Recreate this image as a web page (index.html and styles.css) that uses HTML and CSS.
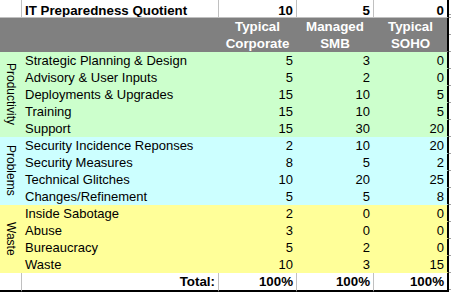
FILE: index.html
```html
<!DOCTYPE html>
<html>
<head>
<meta charset="utf-8">
<link rel="stylesheet" href="styles.css">
</head>
<body>
<div class="sheet">
  <div class="grid">
    <div class="cell title"></div>
    <div class="cell title lbl bold">IT Preparedness Quotient</div>
    <div class="cell title num bold">10</div>
    <div class="cell title num bold">5</div>
    <div class="cell title num bold last">0</div>

    <div class="cell head"></div>
    <div class="cell head"></div>
    <div class="cell head hd">Typical<br>Corporate</div>
    <div class="cell head hd">Managed<br>SMB</div>
    <div class="cell head hd last">Typical<br>SOHO</div>

    <div class="cell green group span5"><span>Productivity</span></div>
    <div class="cell green lbl">Strategic Planning &amp; Design</div>
    <div class="cell green num">5</div><div class="cell green num">3</div><div class="cell green num last">0</div>
    <div class="cell green lbl">Advisory &amp; User Inputs</div>
    <div class="cell green num">5</div><div class="cell green num">2</div><div class="cell green num last">0</div>
    <div class="cell green lbl">Deployments &amp; Upgrades</div>
    <div class="cell green num">15</div><div class="cell green num">10</div><div class="cell green num last">5</div>
    <div class="cell green lbl">Training</div>
    <div class="cell green num">15</div><div class="cell green num">10</div><div class="cell green num last">5</div>
    <div class="cell green lbl">Support</div>
    <div class="cell green num">15</div><div class="cell green num">30</div><div class="cell green num last">20</div>

    <div class="cell cyan group span4"><span>Problems</span></div>
    <div class="cell cyan lbl">Security Incidence Reponses</div>
    <div class="cell cyan num">2</div><div class="cell cyan num">10</div><div class="cell cyan num last">20</div>
    <div class="cell cyan lbl">Security Measures</div>
    <div class="cell cyan num">8</div><div class="cell cyan num">5</div><div class="cell cyan num last">2</div>
    <div class="cell cyan lbl">Technical Glitches</div>
    <div class="cell cyan num">10</div><div class="cell cyan num">20</div><div class="cell cyan num last">25</div>
    <div class="cell cyan lbl">Changes/Refinement</div>
    <div class="cell cyan num">5</div><div class="cell cyan num">5</div><div class="cell cyan num last">8</div>

    <div class="cell yellow group span4"><span>Waste</span></div>
    <div class="cell yellow lbl">Inside Sabotage</div>
    <div class="cell yellow num">2</div><div class="cell yellow num">0</div><div class="cell yellow num last">0</div>
    <div class="cell yellow lbl">Abuse</div>
    <div class="cell yellow num">3</div><div class="cell yellow num">0</div><div class="cell yellow num last">0</div>
    <div class="cell yellow lbl">Bureaucracy</div>
    <div class="cell yellow num">5</div><div class="cell yellow num">2</div><div class="cell yellow num last">0</div>
    <div class="cell yellow lbl">Waste</div>
    <div class="cell yellow num">10</div><div class="cell yellow num">3</div><div class="cell yellow num last">15</div>

    <div class="cell total"></div>
    <div class="cell total num bold">Total:</div>
    <div class="cell total num bold">100%</div>
    <div class="cell total num bold">100%</div>
    <div class="cell total num bold last">100%</div>
  </div>
  <div class="beyond"></div>
</div>
</body>
</html>
```

FILE: styles.css
```css
html, body {
  margin: 0;
  padding: 0;
  background: #ffffff;
}

.sheet {
  display: flex;
  align-items: flex-start;
  font-family: "Liberation Sans", Arial, sans-serif;
  font-size: 13px;
  color: #000000;
}

.grid {
  display: grid;
  grid-template-columns: 22px 197px 78px 77px 75px;
  grid-template-rows: 18px 34px repeat(13, 17px) 19px;
}

.beyond {
  width: 2px;
  height: 292px;
  background: repeating-linear-gradient(to bottom, #a0a0a0 0, #a0a0a0 1px, transparent 1px, transparent 17px);
  background-position: 0 17px;
}

.cell {
  box-sizing: border-box;
  border-right: 1px solid #c0c0c0;
  border-bottom: 1px solid #c0c0c0;
  padding: 1px 3px 0 3px;
  line-height: 16px;
  white-space: nowrap;
  overflow: hidden;
}

.bold { font-weight: bold; font-size: 13.33px; }
.lbl { text-align: left; }
.num { text-align: right; padding-right: 3px; }
.last { border-right: 2px solid #000000; }

.title {
  background: #ffffff;
  padding-top: 2px;
  line-height: 17px;
}
.title.last { border-right-color: #000000; }

.head {
  background: #808080;
  border-color: #808080;
  padding-top: 0;
  line-height: 17px;
}
.head.last { border-right-color: #000000; }

.hd {
  color: #ffffff;
  font-weight: bold;
  font-size: 13.33px;
  text-align: center;
}

.green { background: #ccffcc; border-color: #ccffcc; }
.cyan { background: #ccffff; border-color: #ccffff; }
.yellow { background: #ffff99; border-color: #ffff99; }
.green.last, .cyan.last, .yellow.last { border-right-color: #000000; }

.group {
  display: flex;
  align-items: center;
  justify-content: center;
  padding: 0;
}
.group span {
  writing-mode: vertical-rl;
  font-size: 12px;
  line-height: 14px;
}
.span5 { grid-row: span 5; }
.span4 { grid-row: span 4; }

.total {
  background: #ffffff;
  border-bottom: 2px solid #000000;
}
.total.last { border-right: 2px solid #000000; }
```
